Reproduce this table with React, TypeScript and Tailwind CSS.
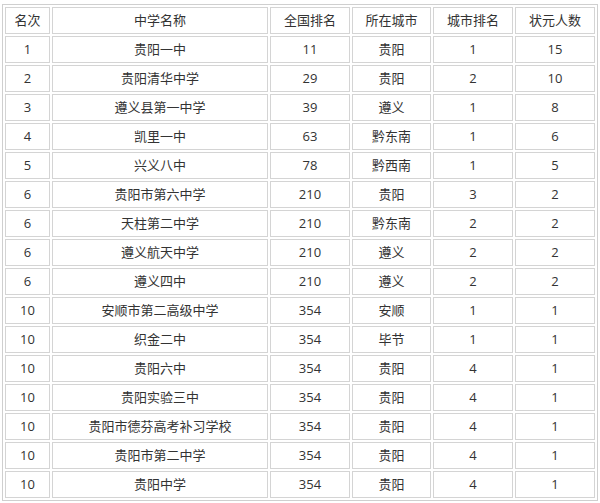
const rows: [string, string, string, string, string, string][] = [
  ['1', '贵阳一中', '11', '贵阳', '1', '15'],
  ['2', '贵阳清华中学', '29', '贵阳', '2', '10'],
  ['3', '遵义县第一中学', '39', '遵义', '1', '8'],
  ['4', '凯里一中', '63', '黔东南', '1', '6'],
  ['5', '兴义八中', '78', '黔西南', '1', '5'],
  ['6', '贵阳市第六中学', '210', '贵阳', '3', '2'],
  ['6', '天柱第二中学', '210', '黔东南', '2', '2'],
  ['6', '遵义航天中学', '210', '遵义', '2', '2'],
  ['6', '遵义四中', '210', '遵义', '2', '2'],
  ['10', '安顺市第二高级中学', '354', '安顺', '1', '1'],
  ['10', '织金二中', '354', '毕节', '1', '1'],
  ['10', '贵阳六中', '354', '贵阳', '4', '1'],
  ['10', '贵阳实验三中', '354', '贵阳', '4', '1'],
  ['10', '贵阳市德芬高考补习学校', '354', '贵阳', '4', '1'],
  ['10', '贵阳市第二中学', '354', '贵阳', '4', '1'],
  ['10', '贵阳中学', '354', '贵阳', '4', '1'],
];

const headers = ['名次', '中学名称', '全国排名', '所在城市', '城市排名', '状元人数'];
const widths = ['w-[45px]', 'w-[216px]', 'w-[80px]', 'w-[79px]', 'w-[80px]', 'w-[80px]'];

const cell = 'h-[27px] border border-[#d4d4d4] p-0 text-center align-middle';

export default function App() {
  return (
    <div className="h-[503px] w-[600px] bg-white pl-[2px] pt-[4px]">
      <table className="w-[596px] table-fixed border-separate border-spacing-[2px] border border-[#cfcfcf] text-[13px] leading-none text-[#333] [font-family:'Open_Sans','Noto_Sans_CJK_SC',sans-serif]">
        <thead>
          <tr>
            {headers.map((h, i) => (
              <th key={h} className={`${cell} ${widths[i]} font-normal`}>
                {h}
              </th>
            ))}
          </tr>
        </thead>
        <tbody>
          {rows.map((r, ri) => (
            <tr key={ri}>
              {r.map((v, ci) => (
                <td key={ci} className={cell}>
                  {v}
                </td>
              ))}
            </tr>
          ))}
        </tbody>
      </table>
    </div>
  );
}
